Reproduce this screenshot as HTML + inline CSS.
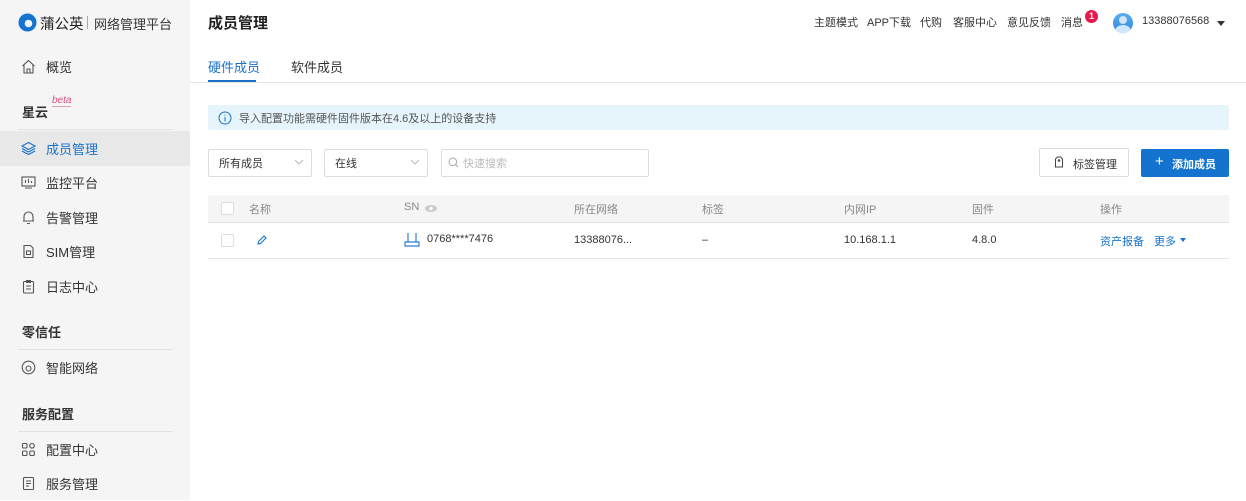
<!DOCTYPE html>
<html><head><meta charset="utf-8"><style>
*{margin:0;padding:0;box-sizing:border-box}
body{width:1246px;height:500px;overflow:hidden;background:#fff;font-family:"Liberation Sans","Noto Sans CJK SC",sans-serif;color:#333;position:relative}
.abs{position:absolute}
.side{left:0;top:0;width:190px;height:500px;background:#f5f5f5}
.nav{position:absolute;left:0;width:190px;height:35px;font-size:13px;color:#333;display:flex;align-items:center;padding-left:46px}
.nav svg{position:absolute;left:21px;top:10px}
.sec{position:absolute;left:22px;font-size:13px;font-weight:bold;color:#333}
.hr{position:absolute;left:18px;width:155px;height:1px;background:#e2e2e2}
.t{position:absolute;font-size:11px;white-space:nowrap}
</style></head><body>
<div class="abs side"></div>
<!-- logo -->
<svg class="abs" style="left:18px;top:13px" width="19" height="19" viewBox="0 0 19 19"><circle cx="9.5" cy="9.5" r="9" fill="#1674d1"/><circle cx="10.5" cy="10.5" r="3.8" fill="#f5f5f5"/></svg>
<div class="abs" style="left:40px;top:13px;font-size:14.5px;color:#222">蒲公英</div>
<div class="abs" style="left:87px;top:16px;width:1px;height:13px;background:#aaa"></div>
<div class="abs" style="left:94px;top:14px;font-size:13px;color:#333">网络管理平台</div>

<div class="nav" style="top:49px"><svg width="15" height="15" viewBox="0 0 15 15" fill="none" stroke="#555" stroke-width="1.1"><path d="M1.5 7 7.5 1.5 13.5 7M3 6v8h9V6M6 14V10h3v4"/></svg>概览</div>
<div class="sec" style="top:102px">星云</div>
<div class="abs" style="left:52px;top:96px;font-size:10px;color:#e0507a;font-style:italic;border-bottom:1px solid #e0a0b8;line-height:10px">beta</div>
<div class="hr" style="top:129px"></div>
<div class="nav" style="top:131px;background:#e8e8e8;color:#1a73c8"><svg width="15" height="15" viewBox="0 0 15 15" fill="none" stroke="#1a73c8" stroke-width="1.1"><path d="M7.5 1.5 14 5 7.5 8.5 1 5z M1 7.5 7.5 11 14 7.5 M1 10 7.5 13.5 14 10"/></svg>成员管理</div>
<div class="nav" style="top:165px"><svg width="15" height="15" viewBox="0 0 15 15" fill="none" stroke="#555" stroke-width="1.1"><rect x="1" y="2" width="13" height="9"/><path d="M4 13h7M4.5 5v3M7.5 4v4M10.5 6v2"/></svg>监控平台</div>
<div class="nav" style="top:200px"><svg width="15" height="15" viewBox="0 0 15 15" fill="none" stroke="#555" stroke-width="1.1"><path d="M3 11V6.5a4.5 4.5 0 0 1 9 0V11zM2 11h11M6 13.5h3"/></svg>告警管理</div>
<div class="nav" style="top:234px"><svg width="15" height="15" viewBox="0 0 15 15" fill="none" stroke="#555" stroke-width="1.1"><path d="M3 1.5h6.5l2.5 2.5v9.5H3z"/><rect x="5.5" y="7" width="4" height="3.5"/></svg>SIM管理</div>
<div class="nav" style="top:269px"><svg width="15" height="15" viewBox="0 0 15 15" fill="none" stroke="#555" stroke-width="1.1"><rect x="2.5" y="2.5" width="10" height="11.5" rx="1"/><path d="M5.5 1.5h4v2h-4zM5 7h5M5 10h5"/></svg>日志中心</div>
<div class="sec" style="top:322px">零信任</div>
<div class="hr" style="top:349px"></div>
<div class="nav" style="top:350px"><svg width="15" height="15" viewBox="0 0 15 15" fill="none" stroke="#555" stroke-width="1.1"><circle cx="7.5" cy="7.5" r="6.3"/><circle cx="7.5" cy="8.5" r="2.5"/></svg>智能网络</div>
<div class="sec" style="top:404px">服务配置</div>
<div class="hr" style="top:431px"></div>
<div class="nav" style="top:432px"><svg width="15" height="15" viewBox="0 0 15 15" fill="none" stroke="#555" stroke-width="1.1"><rect x="1.5" y="1.5" width="4.5" height="4.5" rx="1"/><circle cx="11" cy="3.8" r="2.3"/><rect x="1.5" y="9" width="4.5" height="4.5" rx="1"/><rect x="8.8" y="9" width="4.5" height="4.5" rx="1"/></svg>配置中心</div>
<div class="nav" style="top:466px"><svg width="15" height="15" viewBox="0 0 15 15" fill="none" stroke="#555" stroke-width="1.1"><rect x="2.5" y="1.5" width="10" height="12" rx="1"/><path d="M5 5h5M5 7.5h5M5 10h3"/></svg>服务管理</div>

<!-- header -->
<div class="abs" style="left:208px;top:12px;font-size:15px;font-weight:bold;color:#222">成员管理</div>
<div class="t" style="left:814px;top:14px;color:#333">主题模式</div>
<div class="t" style="left:867px;top:14px;color:#333">APP下载</div>
<div class="t" style="left:920px;top:14px;color:#333">代购</div>
<div class="t" style="left:953px;top:14px;color:#333">客服中心</div>
<div class="t" style="left:1007px;top:14px;color:#333">意见反馈</div>
<div class="t" style="left:1061px;top:14px;color:#333">消息</div>
<div class="abs" style="left:1085px;top:10px;width:13px;height:13px;border-radius:50%;background:#e8194a;color:#fff;font-size:9px;font-weight:bold;text-align:center;line-height:13px">1</div>
<div class="abs" style="left:1113px;top:13px;width:20px;height:20px;border-radius:50%;background:linear-gradient(#5aaeef,#2f86dc);overflow:hidden"><div style="position:absolute;left:6px;top:3px;width:8px;height:8px;border-radius:50%;background:#cfe6fb"></div><div style="position:absolute;left:2px;top:12px;width:16px;height:12px;border-radius:50%;background:#cfe6fb"></div></div>
<div class="t" style="left:1142px;top:15px;color:#333">13388076568</div>
<div class="abs" style="left:1217px;top:21px;width:0;height:0;border-left:4.5px solid transparent;border-right:4.5px solid transparent;border-top:5px solid #333"></div>

<!-- tabs -->
<div class="abs" style="left:208px;top:57px;font-size:13px;color:#1a73c8">硬件成员</div>
<div class="abs" style="left:208px;top:80px;width:48px;height:2px;background:#1a73c8"></div>
<div class="abs" style="left:291px;top:57px;font-size:13px;color:#333">软件成员</div>
<div class="abs" style="left:190px;top:82px;width:1056px;height:1px;background:#e6e6e6"></div>

<!-- info -->
<div class="abs" style="left:208px;top:105px;width:1021px;height:25px;background:#e6f4fc;border-radius:2px"></div>
<svg class="abs" style="left:218px;top:111px" width="14" height="14" viewBox="0 0 14 14" fill="none" stroke="#1a73c8" stroke-width="1"><circle cx="7" cy="7" r="6"/><path d="M7 6v4.5M7 3.8v1"/></svg>
<div class="t" style="left:239px;top:110px;color:#555">导入配置功能需硬件固件版本在4.6及以上的设备支持</div>

<!-- filters -->
<div class="abs" style="left:208px;top:149px;width:104px;height:28px;border:1px solid #ddd;border-radius:2px"></div>
<div class="t" style="left:219px;top:155px;color:#333">所有成员</div>
<svg class="abs" style="left:294px;top:159px" width="10" height="6" viewBox="0 0 10 6" fill="none" stroke="#bbb"><path d="M1 1l4 4 4-4"/></svg>
<div class="abs" style="left:324px;top:149px;width:104px;height:28px;border:1px solid #ddd;border-radius:2px"></div>
<div class="t" style="left:335px;top:155px;color:#333">在线</div>
<svg class="abs" style="left:410px;top:159px" width="10" height="6" viewBox="0 0 10 6" fill="none" stroke="#bbb"><path d="M1 1l4 4 4-4"/></svg>
<div class="abs" style="left:441px;top:149px;width:208px;height:28px;border:1px solid #ddd;border-radius:2px"></div>
<svg class="abs" style="left:448px;top:157px" width="11" height="11" viewBox="0 0 11 11" fill="none" stroke="#aaa"><circle cx="4.8" cy="4.8" r="3.8"/><path d="M7.5 7.5 10 10"/></svg>
<div class="t" style="left:463px;top:155px;color:#bbb">快速搜索</div>

<div class="abs" style="left:1039px;top:148px;width:90px;height:29px;border:1px solid #ddd;border-radius:2px;background:#fff"></div>
<svg class="abs" style="left:1054px;top:156px" width="10" height="12" viewBox="0 0 10 12" fill="none" stroke="#444" stroke-width="1"><path d="M1.5 3 3.5 1h3l2 2v8h-7z"/><circle cx="5" cy="4.5" r=".8"/></svg>
<div class="t" style="left:1073px;top:156px;color:#333">标签管理</div>
<div class="abs" style="left:1141px;top:149px;width:88px;height:28px;background:#1473cf;border-radius:2px"></div>
<div class="t" style="left:1155px;top:153px;color:#fff;font-size:15px">+</div>
<div class="t" style="left:1172px;top:156px;color:#fff;font-weight:bold">添加成员</div>

<!-- table -->
<div class="abs" style="left:208px;top:195px;width:1021px;height:28px;background:#f5f5f5;border-bottom:1px solid #e3e3e3"></div>
<div class="abs" style="left:221px;top:202px;width:13px;height:13px;border:1px solid #ddd;background:#fff;border-radius:2px"></div>
<div class="t" style="left:249px;top:201px;color:#888">名称</div>
<div class="t" style="left:404px;top:201px;color:#888">SN</div>
<svg class="abs" style="left:424px;top:204px" width="14" height="9" viewBox="0 0 14 9"><ellipse cx="7" cy="4.5" rx="6" ry="3.5" fill="#ccc"/><circle cx="7" cy="4.5" r="1.6" fill="#fff"/></svg>
<div class="t" style="left:574px;top:201px;color:#888">所在网络</div>
<div class="t" style="left:702px;top:201px;color:#888">标签</div>
<div class="t" style="left:844px;top:201px;color:#888">内网IP</div>
<div class="t" style="left:972px;top:201px;color:#888">固件</div>
<div class="t" style="left:1100px;top:201px;color:#888">操作</div>

<div class="abs" style="left:221px;top:234px;width:13px;height:13px;border:1px solid #ddd;border-radius:2px"></div>
<svg class="abs" style="left:256px;top:234px" width="12" height="12" viewBox="0 0 12 12" fill="none" stroke="#1a73c8" stroke-width="1.1"><path d="M2 10 2.5 7.5 8 2l2 2-5.5 5.5z"/></svg>
<svg class="abs" style="left:404px;top:232px" width="16" height="15" viewBox="0 0 16 15" fill="none" stroke="#2a7fd4" stroke-width="1.2"><path d="M4 1v9M12 1v9M1 10h14v4H1z"/></svg>
<div class="t" style="left:427px;top:233px;color:#333">0768****7476</div>
<div class="t" style="left:574px;top:234px;color:#333">13388076...</div>
<div class="t" style="left:702px;top:234px;color:#333">–</div>
<div class="t" style="left:844px;top:234px;color:#333">10.168.1.1</div>
<div class="t" style="left:972px;top:234px;color:#333">4.8.0</div>
<div class="t" style="left:1100px;top:233px;color:#1a73c8">资产报备</div>
<div class="t" style="left:1154px;top:233px;color:#1a73c8">更多</div>
<div class="abs" style="left:1180px;top:238px;width:0;height:0;border-left:3.5px solid transparent;border-right:3.5px solid transparent;border-top:4px solid #1a73c8"></div>
<div class="abs" style="left:208px;top:258px;width:1021px;height:1px;background:#e6e6e6"></div>
</body></html>
